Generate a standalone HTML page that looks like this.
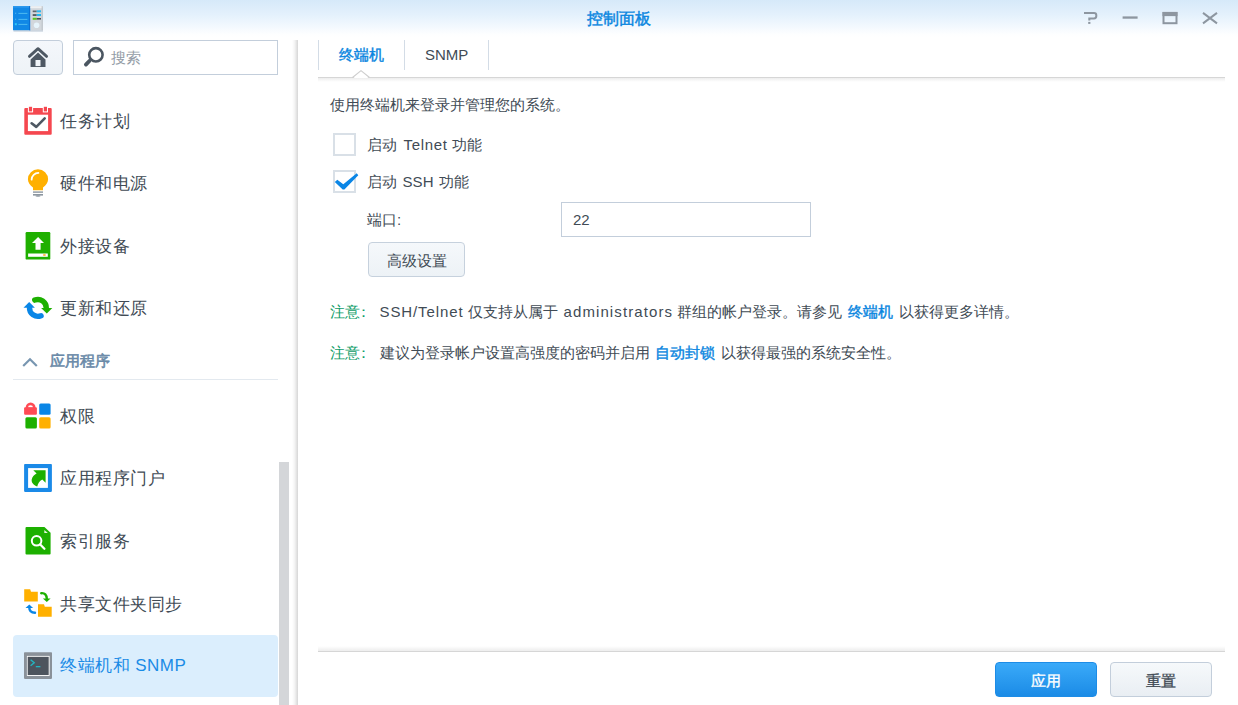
<!DOCTYPE html>
<html><head><meta charset="utf-8">
<style>
*{box-sizing:border-box;margin:0;padding:0}
html,body{width:1238px;height:705px;overflow:hidden;background:#fff}
body{position:relative;font-family:"Liberation Sans",sans-serif;color:#414b55}
.abs{position:absolute}
.title{left:0;top:0;width:1238px;height:37px;background:linear-gradient(#d6e9f9 0%,#e4f1fc 40%,#f2f8fe 70%,#fdfeff 92%,#fff 100%)}
.ttxt{left:0;width:1238px;top:0;height:37px;line-height:37px;text-align:center;font-size:16.25px;color:#0a86e0;-webkit-text-stroke:0.45px #0a86e0}
.btnhome{left:13px;top:40px;width:50px;height:35px;border:1px solid #c3cedb;border-radius:4px;background:linear-gradient(#f4f7fb,#eef3f7)}
.search{left:73px;top:40px;width:205px;height:35px;border:1px solid #c3cedb;background:#fff}
.stxt{left:111px;top:40px;height:35px;line-height:35px;font-size:15px;color:#939ca6}
.item{left:60px;height:30px;line-height:30px;font-size:17px;letter-spacing:0.5px;white-space:nowrap}
.ico{left:22px;width:32px;height:32px}
.hdr{left:50px;height:24px;line-height:24px;font-size:15px;color:#6a8aa8;-webkit-text-stroke:0.6px #6a8aa8}
.sel{left:13px;top:635px;width:265px;height:62px;background:#dbeefd;border-radius:4px}
.thumb{left:279px;top:462px;width:10px;height:243px;background:#d4d6d9}
.divider{left:292px;top:40px;width:6px;height:665px;background:linear-gradient(90deg,rgba(0,0,0,0),rgba(0,0,0,0.04) 40%,rgba(0,0,0,0.16))}
.tabsep{top:40px;width:1px;height:30px;background:#d3dce6}
.tab{top:40px;height:30px;line-height:30px;font-size:15px}
.tabline{left:318px;top:77px;width:907px;height:1px;background:#d6d6d6}
.tabshadow{left:318px;top:78px;width:907px;height:4px;background:linear-gradient(rgba(0,0,0,0.07),rgba(0,0,0,0))}
.txt{font-size:15px;height:22px;line-height:22px;white-space:nowrap}
.cb{width:23px;height:23px;border:2px solid #d9e0e7;background:#fff}
.input{left:561px;top:202px;width:250px;height:35px;border:1px solid #c3cedb;background:#fff}
.btn{border:1px solid #c6d1dd;border-radius:4px;background:linear-gradient(#f5f8fb,#edf2f6);text-align:center;font-size:15px}
.green{color:#0e9c68}
.link{color:#0a86e0;-webkit-text-stroke:0.4px #0a86e0}
.foot{left:318px;top:651px;width:907px;height:1px;background:#d6d6d6}
.footshadow{left:318px;top:646px;width:907px;height:5px;background:linear-gradient(rgba(0,0,0,0),rgba(0,0,0,0.07))}
.apply{left:995px;top:662px;width:102px;height:35px;border-radius:4px;border:1px solid #1d8ce6;background:linear-gradient(#3aaaf9,#1b8be6);color:#fff;text-align:center;line-height:34px;padding-top:1px;font-size:15px;-webkit-text-stroke:0.35px #fff}
.reset{left:1110px;top:662px;width:102px;height:35px;border-radius:4px;border:1px solid #c3cedb;background:linear-gradient(#f6f9fb,#e9eef3);color:#414b55;text-align:center;line-height:34px;padding-top:1px;font-size:15px;-webkit-text-stroke:0.35px #414b55}
</style></head><body>
<div class="abs title"></div>
<div class="abs ttxt">控制面板</div>

<div class="abs btnhome"></div>
<div class="abs search"></div>
<div class="abs stxt">搜索</div>

<div class="abs sel"></div>
<div class="abs item" style="top:107px">任务计划</div>
<div class="abs item" style="top:169px">硬件和电源</div>
<div class="abs item" style="top:232px">外接设备</div>
<div class="abs item" style="top:294px">更新和还原</div>
<div class="abs hdr" style="top:349px">应用程序</div>
<div class="abs" style="left:13px;top:379px;width:265px;height:1px;background:#e3e9ef"></div>
<div class="abs item" style="top:402px">权限</div>
<div class="abs item" style="top:464px">应用程序门户</div>
<div class="abs item" style="top:527px">索引服务</div>
<div class="abs item" style="top:590px">共享文件夹同步</div>
<div class="abs item" style="top:651px;color:#1a8be6">终端机和 SNMP</div>

<div class="abs thumb"></div>
<div class="abs divider"></div>

<div class="abs tabsep" style="left:318px"></div>
<div class="abs tabsep" style="left:404px"></div>
<div class="abs tabsep" style="left:488px"></div>
<div class="abs tab link" style="left:339px">终端机</div>
<div class="abs tab" style="left:425px">SNMP</div>
<div class="abs tabline"></div>
<div class="abs tabshadow"></div>

<div class="abs txt" style="left:330px;top:94px">使用终端机来登录并管理您的系统。</div>
<div class="abs cb" style="left:333px;top:133px"></div>
<div class="abs txt" style="left:367px;top:134px">启动</div>
<div class="abs txt" style="left:403.5px;top:134px;letter-spacing:0.7px">Telnet</div>
<div class="abs txt" style="left:452px;top:134px">功能</div>
<div class="abs cb" style="left:333px;top:170px"></div>
<div class="abs txt" style="left:367px;top:171px">启动</div>
<div class="abs txt" style="left:402.5px;top:171px;letter-spacing:0.1px">SSH</div>
<div class="abs txt" style="left:439px;top:171px">功能</div>
<div class="abs txt" style="left:367px;top:209px">端口:</div>
<div class="abs input"></div>
<div class="abs txt" style="left:573px;top:209px">22</div>
<div class="abs btn" style="left:368px;top:242px;width:97px;height:35px;line-height:34px;padding-top:1px">高级设置</div>

<div class="abs txt green" style="left:330px;top:301px">注意</div><div class="abs txt green" style="left:356px;top:301px">：</div>
<div class="abs txt" style="left:379.5px;top:301px;letter-spacing:0.9px">SSH/Telnet</div>
<div class="abs txt" style="left:468px;top:301px">仅支持从属于</div>
<div class="abs txt" style="left:563.5px;top:301px;letter-spacing:1.1px">administrators</div>
<div class="abs txt" style="left:677px;top:301px">群组的帐户登录。请参见</div>
<div class="abs txt link" style="left:848px;top:301px">终端机</div>
<div class="abs txt" style="left:899px;top:301px">以获得更多详情。</div>
<div class="abs txt green" style="left:330px;top:342px">注意</div><div class="abs txt green" style="left:356px;top:342px">：</div>
<div class="abs txt" style="left:380px;top:342px">建议为登录帐户设置高强度的密码并启用</div>
<div class="abs txt link" style="left:655px;top:342px">自动封锁</div>
<div class="abs txt" style="left:720.5px;top:342px">以获得最强的系统安全性。</div>

<div class="abs footshadow"></div>
<div class="abs foot"></div>
<div class="abs apply">应用</div>
<div class="abs reset">重置</div>
<svg class="abs" style="left:0;top:0" width="1238" height="705" viewBox="0 0 1238 705">
<!-- logo -->
<rect x="13.5" y="29.5" width="29.5" height="2.2" fill="#aebccb" opacity="0.6"/>
<rect x="13" y="6.2" width="17.4" height="24" fill="#1188e6"/>
<rect x="13" y="6.2" width="17.4" height="1.5" fill="#2a98ee"/>
<rect x="29" y="6.2" width="1.4" height="24" fill="#0b70d4"/>
<rect x="30.4" y="6.2" width="12.3" height="24" fill="#d2d7dc"/>
<rect x="30.4" y="6.2" width="12.3" height="2" fill="#eef1f3"/>
<rect x="41.7" y="6.2" width="1" height="24" fill="#b9bfc5"/>
<rect x="18.4" y="12.9" width="9" height="0.9" fill="#55bff2"/>
<rect x="18.4" y="18.9" width="9" height="0.9" fill="#55bff2"/>
<rect x="18.4" y="23.9" width="9" height="0.9" fill="#55bff2"/>
<rect x="15" y="12.7" width="1.2" height="1.2" fill="#45b0ee"/>
<rect x="15" y="18.7" width="1.2" height="1.2" fill="#45b0ee"/>
<rect x="14.8" y="23.2" width="2" height="2" fill="#30c8f5"/>
<rect x="32.7" y="10.5" width="4" height="1.7" fill="#60666c"/>
<rect x="36.7" y="10.3" width="4.3" height="2" fill="#2cb6ee"/>
<rect x="32.7" y="14.2" width="4" height="1.7" fill="#4a5056"/>
<rect x="36.7" y="14" width="4.3" height="2" fill="#1fb8f2"/>
<rect x="32.7" y="17.8" width="4" height="2" fill="#56c81c"/>
<rect x="36.7" y="18" width="4.3" height="1.6" fill="#4a5056"/>
<circle cx="36.6" cy="25.2" r="2.8" fill="#e6f4fb"/>
<!-- window controls -->
<g fill="none" stroke="#8d96a0" stroke-width="2">
<path d="M1084,13 H1094 Q1096.3,13 1096.3,15.3 V16 Q1096.3,18.4 1094,18.4 H1089.3 V20.6"/>
<path d="M1203,12.9 L1217,23.4 M1217,12.9 L1203,23.4"/>
<rect x="1163.5" y="13" width="13" height="10.2"/>
</g>
<rect x="1088.2" y="21.9" width="2.2" height="2" fill="#8d96a0"/>
<rect x="1122.6" y="16.4" width="15" height="2.3" fill="#8d96a0"/>
<rect x="1162.5" y="11.9" width="15" height="4.2" fill="#8d96a0"/>
<!-- home -->
<polyline points="29.4,56.4 38,48.6 46.6,56.4" fill="none" stroke="#4e5863" stroke-width="2.8" stroke-linecap="round" stroke-linejoin="round"/>
<path d="M38,52.4 L45.5,59.4 V67 H30.6 V59.4 Z" fill="#4e5863"/>
<rect x="35.5" y="60" width="5" height="6.1" fill="#f1f5f9"/>
<!-- search -->
<circle cx="95.9" cy="54.8" r="6.7" fill="none" stroke="#4b5661" stroke-width="2.6"/>
<line x1="89.6" y1="60.7" x2="85.9" y2="64.6" stroke="#4b5661" stroke-width="3.8" stroke-linecap="round"/>
<!-- calendar -->
<rect x="24.3" y="108.1" width="27.4" height="26.6" rx="1" fill="#f5474f"/>
<rect x="27.9" y="114.7" width="20.2" height="16.4" fill="#fff"/>
<rect x="27.9" y="106" width="5.2" height="6.4" fill="#fff"/>
<rect x="42.8" y="106" width="5.2" height="6.4" fill="#fff"/>
<rect x="28.9" y="106.8" width="3.2" height="4.6" fill="#f5474f"/>
<rect x="43.8" y="106.8" width="3.2" height="4.6" fill="#f5474f"/>
<polyline points="31.6,123.3 36.3,126.9 44.7,118.4" fill="none" stroke="#4e5863" stroke-width="2.6" stroke-linecap="round" stroke-linejoin="round"/>
<!-- bulb -->
<path d="M33,190.2 V187.6 C30,185.3 27.9,182.6 27.9,179.3 A10.1,10.1 0 1 1 48.1,179.3 C48.1,182.6 46,185.3 43,187.6 V190.2 Z" fill="#ffb000"/>
<path d="M31.6,179.6 A7,7 0 0 1 38.4,172.9" fill="none" stroke="#fff" stroke-width="1.8" stroke-linecap="round"/>
<rect x="33" y="191.4" width="10" height="1.4" fill="#8c96a0"/>
<rect x="33" y="194" width="10" height="1.6" fill="#8c96a0"/>
<ellipse cx="38" cy="196" rx="2.6" ry="0.7" fill="#8c96a0"/>
<!-- external device -->
<rect x="25.6" y="232.1" width="24.7" height="27.5" rx="1.2" fill="#1fb000"/>
<polygon points="38.1,237.1 44,243 40.6,243 40.6,249.7 35.5,249.7 35.5,243 32,243" fill="#fff"/>
<rect x="28.1" y="253.5" width="19.7" height="3.3" fill="#fff"/>
<ellipse cx="44.4" cy="255.1" rx="1.6" ry="0.75" fill="#ffa000"/>
<!-- refresh -->
<path d="M34.75,300.1 A8.4,8.4 0 0 1 46.3,308.2" fill="none" stroke="#1db000" stroke-width="5.4" stroke-linecap="round"/>
<polygon points="41.1,308 52.3,308 46.8,313.6" fill="#1db000"/>
<path d="M41.05,315.7 A8.4,8.4 0 0 1 29.5,307.6" fill="none" stroke="#0a86e6" stroke-width="5.4" stroke-linecap="round"/>
<polygon points="23.5,307.7 34.9,307.7 29.2,301.9" fill="#0a86e6"/>
<!-- permissions -->
<path d="M25.6,408 A5,5.6 0 0 1 35.6,408 Z" fill="#ff4b55"/>
<path d="M28,407.6 A2.5,2.3 0 0 1 33,407.6 Z" fill="#fff"/>
<rect x="24.1" y="407.2" width="12.8" height="7.6" rx="1" fill="#ff4b55"/>
<rect x="39.2" y="403.4" width="11.4" height="11.4" rx="1.5" fill="#0a86e6"/>
<rect x="25.4" y="417.2" width="11.5" height="11.2" rx="1.5" fill="#1db000"/>
<rect x="39.2" y="417.2" width="11.4" height="11.2" rx="1.5" fill="#ffb000"/>
<!-- portal -->
<rect x="24.1" y="464.1" width="27.8" height="27.8" rx="0.8" fill="#1a8ae8"/>
<rect x="28.1" y="468.1" width="19.8" height="19.8" fill="#fff"/>
<path d="M33.3,470.2 L45.6,470.2 L45.6,482.7 L42.3,479.4 C39.5,481 37.8,483.5 37.3,486.6 C33.5,485 31.2,482.5 31.7,479.5 C32.2,476.5 34.5,474.8 36.6,473.5 Z" fill="#1db000"/>
<!-- index -->
<path d="M26.5,527 H44.4 L50.6,532.8 V553.6 Q50.6,554.6 49.6,554.6 H26.5 Q25.5,554.6 25.5,553.6 V528 Q25.5,527 26.5,527 Z" fill="#1db000"/>
<polygon points="44.3,530 47.9,533 44.3,533" fill="#e4f7e0"/>
<circle cx="36.6" cy="540.8" r="4.8" fill="none" stroke="#fff" stroke-width="2"/>
<line x1="40.2" y1="544.5" x2="44.4" y2="548.7" stroke="#fff" stroke-width="2.3" stroke-linecap="round"/>
<!-- folder sync -->
<path d="M24.2,589.2 H30.2 L31,591.8 H37.8 V601.5 H24.2 Z" fill="#ffb000"/>
<path d="M38,604.2 H44 L44.8,606.7 H51.7 V616.7 H38 Z" fill="#ffb000"/>
<path d="M41.2,593.2 Q46.6,592.6 46.8,598.8" fill="none" stroke="#1db000" stroke-width="2.4" stroke-linecap="round"/>
<polygon points="42.9,598.5 50.6,598.5 46.8,602" fill="#1db000"/>
<path d="M29.3,607.4 Q29.3,612.6 35,612.7" fill="none" stroke="#0a86e6" stroke-width="2.4" stroke-linecap="round"/>
<polygon points="25.5,607.9 33.1,607.9 29.3,604.4" fill="#0a86e6"/>
<!-- terminal -->
<rect x="24" y="652.2" width="28" height="26.7" rx="0.8" fill="#8a9199"/>
<rect x="26.9" y="655.9" width="22.7" height="20" fill="#fff"/>
<rect x="27.7" y="656.8" width="21" height="18.2" fill="#4d545d"/>
<polyline points="30.6,659.8 34.2,662.8 30.6,665.8" fill="none" stroke="#22b5c0" stroke-width="1.4"/>
<rect x="35.8" y="666" width="4.6" height="1.3" fill="#22b5c0"/>
<!-- header chevron -->
<polyline points="23.2,366 30,359.3 36.8,366" fill="none" stroke="#7896b1" stroke-width="2.2"/>
<!-- checkbox check -->
<polygon points="334.8,182.1 337.3,179.7 343.3,184.3 356.7,173.2 358.3,175.2 344.4,189.5 342.7,189.5" fill="#0a86e6"/>
<!-- tab notch -->
<polygon points="353.5,78 361,71.2 368.5,78" fill="#fff"/><polyline points="352.5,77.5 361,70.6 369.5,77.5" fill="none" stroke="#cdcdcd" stroke-width="1.1"/>
</svg>
</body></html>
